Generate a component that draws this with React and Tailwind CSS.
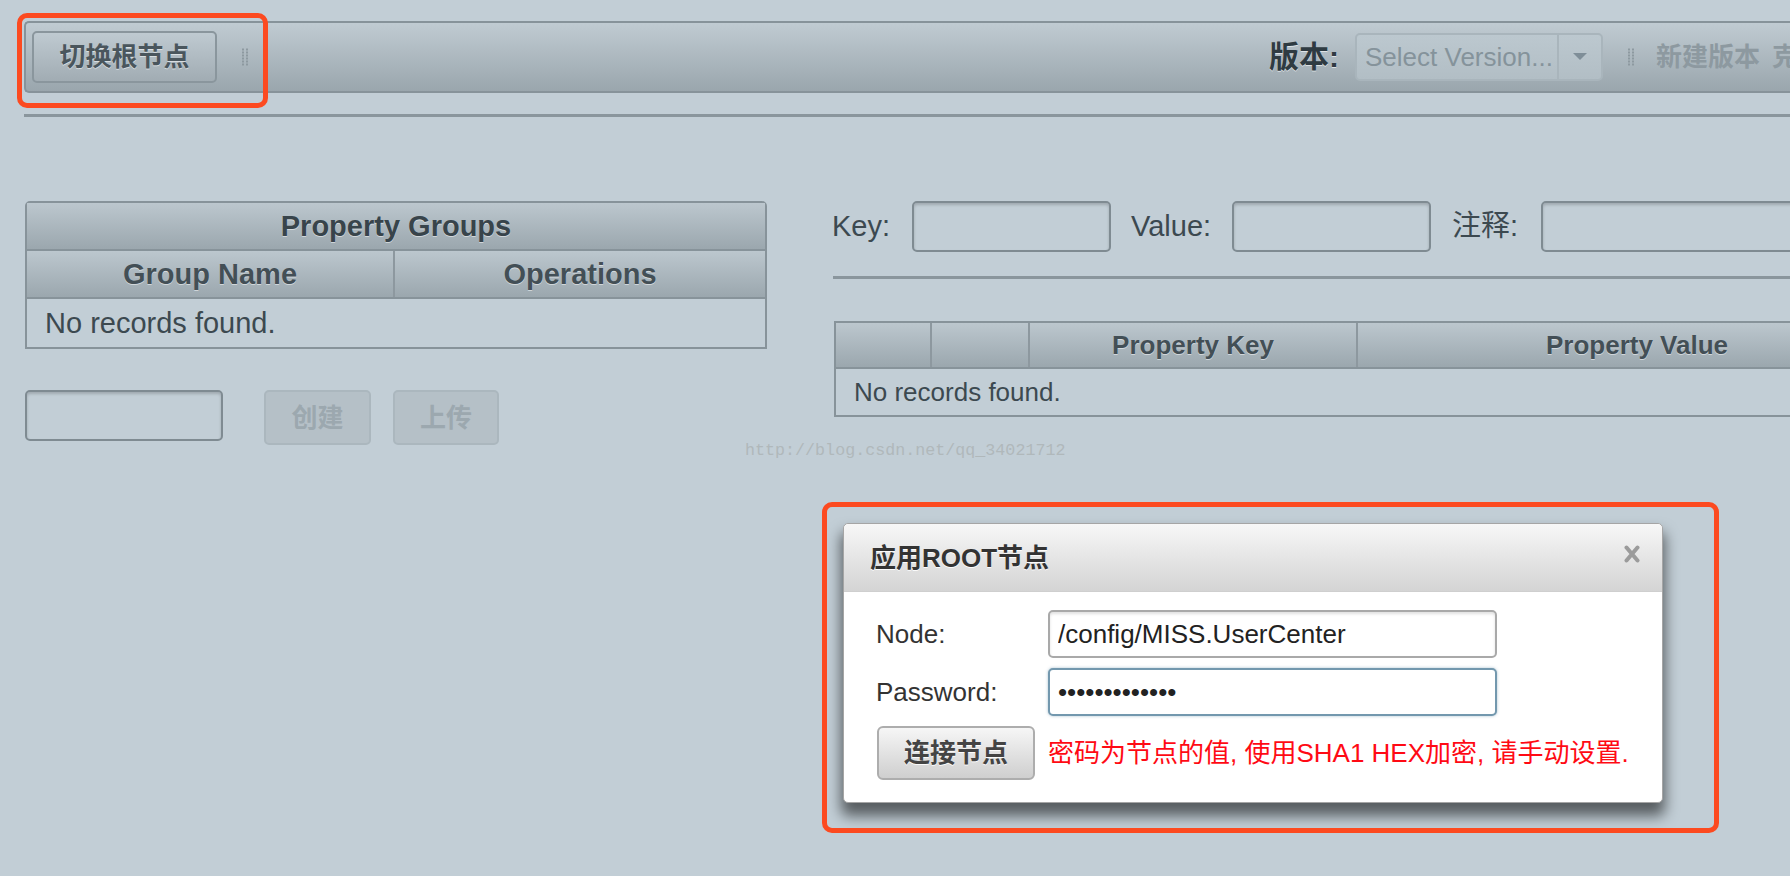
import React from "react";

function Grip({ className = "" }) {
  const dots = [];
  for (let y = 0; y < 6; y++)
    for (let x = 0; x < 2; x++)
      dots.push(<rect key={`${x}-${y}`} x={x * 4} y={y * 3 + 0.5} width="2" height="2" fill="#8d99a0" />);
  return (
    <svg width="6" height="18" viewBox="0 0 6 18" className={className}>
      {dots}
    </svg>
  );
}

const inputCls =
  "h-[51px] w-[199px] rounded-[5px] border-2 border-[#7f8b92] bg-[#c2ced6] shadow-[inset_0_2px_3px_rgba(0,0,0,0.18)]";

export default function App() {
  return (
    <div className="relative w-[1790px] h-[876px] overflow-hidden bg-[#c2ced6] font-[family-name:Liberation_Sans,Noto_Sans_CJK_SC,sans-serif] text-[#3c4950]">
      <div className="w-[2000px] pt-[21px] pl-[24px]">
        {/* Toolbar */}
        <div className="flex h-[72px] items-center rounded-l-[5px] border-y-2 border-l-2 border-[#87939a] bg-gradient-to-b from-[#c0cbd2] to-[#9aa6ad]">
          <button className="ml-[6px] flex h-[52px] w-[185px] items-center justify-center rounded-[5px] border-2 border-[#8a969d] bg-gradient-to-b from-[#bfcad1] to-[#a1acb3] text-[26px] font-bold leading-none text-[#4a565d] [text-shadow:0_1px_0_rgba(255,255,255,0.55)]">
            切换根节点
          </button>
          <Grip className="ml-[25px]" />
          <div className="ml-[1021px] flex items-center">
            <span className="text-[30px] font-bold leading-none text-[#2f3b42] [text-shadow:0_1px_0_rgba(255,255,255,0.6)]">
              版本:
            </span>
            <div className="ml-[16px] flex h-[48px] w-[248px] rounded-[5px] border-2 border-[#a9b5bc] bg-gradient-to-b from-[#bcc8cf] to-[#b2bec5]">
              <div className="flex flex-1 items-center pl-[8px] text-[26px] leading-none text-[#85939b]">
                Select Version...
              </div>
              <div className="flex w-[44px] items-center justify-center border-l-2 border-[#a9b5bc]">
                <svg width="14" height="8" viewBox="0 0 14 8">
                  <path d="M0 0 L14 0 L7 7 Z" fill="#7f8e98" />
                </svg>
              </div>
            </div>
            <Grip className="ml-[25px]" />
            <span className="ml-[22px] text-[26px] font-bold leading-none text-[#8d99a0]">新建版本</span>
            <span className="ml-[12px] text-[26px] font-bold leading-none text-[#8d99a0]">克隆版本</span>
          </div>
        </div>

        {/* separator */}
        <div className="mt-[21px] h-[3px] bg-[#8a969d]" />

        {/* content */}
        <div className="mt-[84px] flex items-start">
          {/* left column */}
          <div className="ml-px w-[742px]">
            <div className="rounded-t-[5px] border-2 border-[#87939a]">
              <div className="flex h-[48px] items-center justify-center border-b-2 border-[#87939a] bg-gradient-to-b from-[#bcc7ce] to-[#9ba7ae] text-[29px] font-bold leading-none text-[#38444b] [text-shadow:0_1px_0_rgba(255,255,255,0.5)]">
                Property Groups
              </div>
              <div className="flex h-[48px] border-b-2 border-[#87939a] bg-gradient-to-b from-[#bcc7ce] to-[#9ba7ae] text-[29px] font-bold leading-none text-[#434f56] [text-shadow:0_1px_0_rgba(255,255,255,0.5)]">
                <div className="flex w-[368px] items-center justify-center border-r-2 border-[#8d989f]">Group Name</div>
                <div className="flex flex-1 items-center justify-center">Operations</div>
              </div>
              <div className="flex h-[48px] items-center pl-[18px] text-[29px] leading-none text-[#3c4950]">
                No records found.
              </div>
            </div>
            <div className="mt-[41px] flex items-start">
              <div className="h-[51px] w-[198px] rounded-[5px] border-2 border-[#7f8b92] bg-[#c2ced6] shadow-[inset_0_2px_3px_rgba(0,0,0,0.18)]" />
              <button className="ml-[41px] flex h-[55px] w-[107px] items-center justify-center rounded-[5px] border-2 border-[#abb7be] bg-[#b5c0c7] text-[26px] font-bold leading-none text-[#9ca8af]">
                创建
              </button>
              <button className="ml-[22px] flex h-[55px] w-[106px] items-center justify-center rounded-[5px] border-2 border-[#abb7be] bg-[#b5c0c7] text-[26px] font-bold leading-none text-[#9ca8af]">
                上传
              </button>
            </div>
          </div>

          {/* right column */}
          <div className="ml-[65px] w-[1160px]">
            <div className="flex h-[51px] items-center text-[29px] leading-none text-[#3c4950]">
              <span>Key:</span>
              <div className={"ml-[22px] " + inputCls} />
              <span className="ml-[20px]">Value:</span>
              <div className={"ml-[21px] " + inputCls} />
              <span className="ml-[21px]">注释:</span>
              <div className="ml-[23px] h-[51px] w-[320px] rounded-[5px] border-2 border-[#7f8b92] bg-[#c2ced6] shadow-[inset_0_2px_3px_rgba(0,0,0,0.18)]" />
            </div>
            <div className="ml-px mt-[24px] h-[3px] bg-[#8a969d]" />
            <div className="ml-[2px] mt-[42px] w-[1120px] border-2 border-[#87939a]">
              <div className="flex h-[46px] border-b-2 border-[#87939a] bg-gradient-to-b from-[#bcc7ce] to-[#9ba7ae] text-[26px] font-bold leading-none text-[#434f56] [text-shadow:0_1px_0_rgba(255,255,255,0.5)]">
                <div className="w-[96px] border-r-2 border-[#8d989f]" />
                <div className="w-[98px] border-r-2 border-[#8d989f]" />
                <div className="flex w-[328px] items-center justify-center border-r-2 border-[#8d989f]">Property Key</div>
                <div className="flex w-[558px] items-center justify-center">Property Value</div>
              </div>
              <div className="flex h-[46px] items-center pl-[18px] text-[26px] leading-none text-[#3c4950]">
                No records found.
              </div>
            </div>
          </div>
        </div>
      </div>

      {/* watermark */}
      <div className="pointer-events-none absolute left-[745px] top-[441px] font-[family-name:Liberation_Mono,monospace] text-[16.7px] leading-[20px] text-[#b0b8bb]">
        http://blog.csdn.net/qq_34021712
      </div>

      {/* dialog */}
      <div className="absolute left-[843px] top-[523px] h-[280px] w-[820px] rounded-[5px] border border-[#a5a5a5] bg-white shadow-[0_11px_14px_2px_rgba(0,0,0,0.55)]">
        <div className="relative flex h-[68px] items-center rounded-t-[5px] border-b border-[#cfcfcf] bg-gradient-to-b from-[#f7f7f7] to-[#d4d4d4] pl-[26px]">
          <span className="text-[26px] font-bold leading-none text-[#333] [text-shadow:0_1px_0_rgba(255,255,255,0.9)]">
            应用ROOT节点
          </span>
          <svg className="absolute right-[22px] top-[21px]" width="16" height="18" viewBox="0 0 16 18">
            <path d="M2.5 2.5 L13.5 15.5 M13.5 2.5 L2.5 15.5" stroke="#9b9b9b" strokeWidth="4" strokeLinecap="round" />
          </svg>
        </div>
        <div className="grid grid-cols-[172px_449px] gap-y-[10px] pl-[32px] pt-[18px] text-[26px] leading-none text-[#333]">
          <div className="flex h-[48px] items-center">Node:</div>
          <input
            readOnly
            defaultValue="/config/MISS.UserCenter"
            className="h-[48px] w-[449px] rounded-[5px] border-2 border-[#a9a9a9] bg-white pl-[8px] text-[26px] text-[#222] shadow-[inset_0_2px_3px_rgba(0,0,0,0.12)] outline-none"
          />
          <div className="flex h-[48px] items-center">Password:</div>
          <input
            readOnly
            type="password"
            defaultValue="aaaaaaaaaaaaa"
            className="h-[48px] w-[449px] rounded-[5px] border-2 border-[#7398ae] bg-white pl-[8px] text-[26px] text-[#222] shadow-[0_0_3px_rgba(82,130,160,0.5)] outline-none"
          />
          <div className="flex h-[54px] items-center">
            <button className="ml-px flex h-[54px] w-[158px] items-center justify-center rounded-[6px] border-2 border-[#adadad] bg-gradient-to-b from-[#f6f6f6] to-[#cfcfcf] text-[26px] font-bold leading-none text-[#444] [text-shadow:0_1px_0_rgba(255,255,255,0.9)]">
              连接节点
            </button>
          </div>
          <div className="flex h-[54px] items-center whitespace-nowrap text-[#ff0a14]">
            密码为节点的值, 使用SHA1 HEX加密, 请手动设置.
          </div>
        </div>
      </div>

      {/* annotation boxes */}
      <div className="pointer-events-none absolute left-[17px] top-[13px] h-[95px] w-[251px] rounded-[10px] border-[5px] border-[#fc4a20]" />
      <div className="pointer-events-none absolute left-[822px] top-[502px] h-[331px] w-[897px] rounded-[10px] border-[5px] border-[#fc4a20]" />
    </div>
  );
}
